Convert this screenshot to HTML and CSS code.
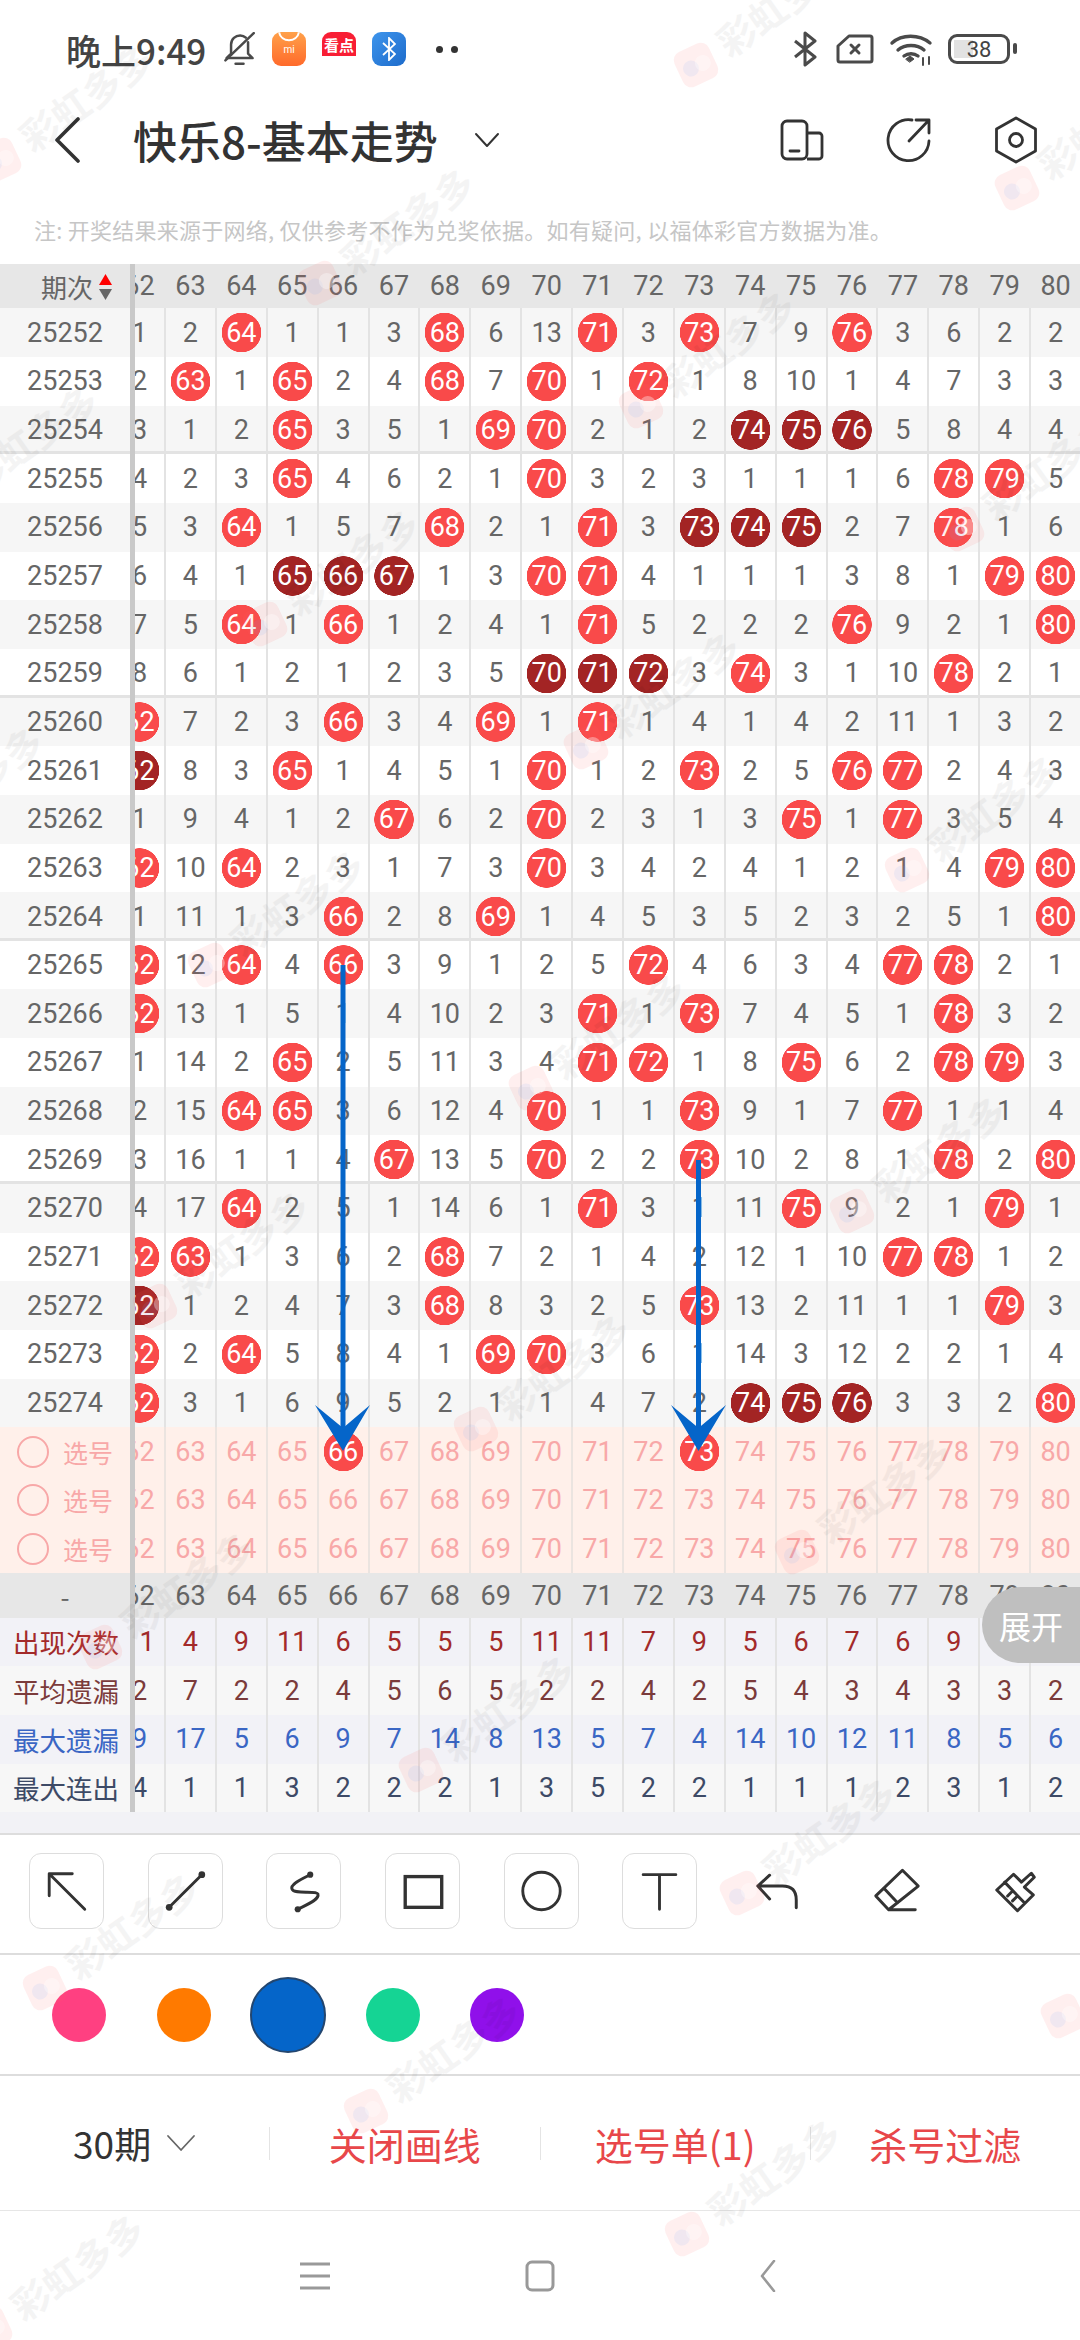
FILE: index.html
```html
<!DOCTYPE html>
<html lang="zh-CN">
<head>
  <meta charset="UTF-8">
  <title>快乐8-基本走势</title>
  <link rel="stylesheet" href="styles.css">
</head>
<body>

  <header class="statusbar">
    <span class="clock">晚上9:49</span>
    <svg class="st-bell" width="32" height="34" viewBox="2 2 28 30" fill="none" stroke="#4a4a4a" stroke-width="2.200" stroke-linecap="round" stroke-linejoin="round"><path d="M9 22V13C9 8 13 5 17 5c2 0 4 1 5 2M24 11v10l4 4H5l4-4"/><path d="M13 30h7"/><path d="M29 3 4 27"/></svg>
    <span class="app app-shop"><svg width="24" height="10" viewBox="0 0 24 10" fill="none" stroke="#fff" stroke-width="2"><path d="M2 0c2 11 18 11 20 0"/></svg><small>mi</small></span>
    <span class="app app-news"><b>看点</b></span>
    <span class="app app-bt"><svg width="14" height="24" viewBox="0 0 14 24" fill="none" stroke="#fff" stroke-width="1.800"><path d="M1 6l12 11-6 6V1l6 6L1 18"/></svg></span>
    <span class="dots"><i></i><i></i></span>

    <div class="status-right">
      <svg class="st-bt" width="24" height="36" viewBox="0 0 24 36" fill="none" stroke="#4a4a4a" stroke-width="3" stroke-linejoin="round"><path d="M2 10l20 16-10 8V2l10 8L2 26"/></svg>
      <svg width="38" height="30" viewBox="0 0 38 30" fill="none" stroke="#4a4a4a" stroke-width="3" stroke-linejoin="round"><path d="M13 2h21a2 2 0 0 1 2 2v22a2 2 0 0 1-2 2H4a2 2 0 0 1-2-2V12z"/><path d="M15 11l8 8M23 11l-8 8" stroke-linecap="round"/></svg>
      <svg width="44" height="34" viewBox="0 0 44 34" fill="none" stroke="#4a4a4a" stroke-width="3.400" stroke-linecap="round"><path d="M3 11c10-9 27-9 38 0M9 18c7-6 19-6 26 0M15 24c4-3 10-3 14 0"/><path d="M17 27l4-3 4 3-4 3z" fill="#4a4a4a" stroke-width="1"/><path d="M34 26v7M40 25v7" stroke-width="2"/></svg>
      <span class="battery"><span class="battery-level"></span><span class="battery-num">38</span></span>
    </div>
  </header>

  <nav class="titlebar">
    <svg class="back" width="30" height="46" viewBox="0 0 30 46" fill="none" stroke="#333" stroke-width="3.600" stroke-linecap="round" stroke-linejoin="round"><path d="M26 2 5 23l21 21"/></svg>
    <h1>快乐8-基本走势</h1>
    <svg class="caret" width="26" height="16" viewBox="0 0 26 16" fill="none" stroke="#333" stroke-width="2" stroke-linecap="round" stroke-linejoin="round"><path d="M2 2l11 12L24 2"/></svg>
    <div class="title-icons">
      <svg width="44" height="42" viewBox="0 0 44 42" fill="none" stroke="#333" stroke-width="2.800" stroke-linejoin="round"><rect x="2" y="2" width="25" height="38" rx="5"/><path d="M27 14h12a3 3 0 0 1 3 3v20a3 3 0 0 1-3 3H27"/><path d="M10 32h9" stroke-linecap="round"/></svg>
      <svg width="46" height="46" viewBox="0 0 46 46" fill="none" stroke="#333" stroke-width="2.800" stroke-linecap="round" stroke-linejoin="round"><path d="M26 3A20.500 20.500 0 1 0 43 24"/><path d="M23 24 43 3M30 3h13v13"/></svg>
      <svg width="44" height="48" viewBox="0 0 44 48" fill="none" stroke="#333" stroke-width="2.800" stroke-linejoin="round"><path d="M22 2l19.500 11v22L22 46 2.500 35V13z"/><circle cx="22" cy="24" r="6.500"/></svg>
    </div>
  </nav>

  <p class="note">注: 开奖结果来源于网络, 仅供参考不作为兑奖依据。如有疑问, 以福体彩官方数据为准。</p>

  <section class="board">
    <div class="row head">
      <div class="period">期次<svg class="sort" width="13" height="26" viewBox="0 0 13 26"><path d="M6.500 0 13 11H0z" fill="#f00"/><path d="M0 15h13L6.500 26z" fill="#666"/></svg></div>
      <div class="cells"><span>62</span><span>63</span><span>64</span><span>65</span><span>66</span><span>67</span><span>68</span><span>69</span><span>70</span><span>71</span><span>72</span><span>73</span><span>74</span><span>75</span><span>76</span><span>77</span><span>78</span><span>79</span><span>80</span></div>
    </div>

    <div class="draws">
      <div class="row"><div class="period">25252</div><div class="cells"><span>1</span><span>2</span><span class="hit">64</span><span>1</span><span>1</span><span>3</span><span class="hit">68</span><span>6</span><span>13</span><span class="hit">71</span><span>3</span><span class="hit">73</span><span>7</span><span>9</span><span class="hit">76</span><span>3</span><span>6</span><span>2</span><span>2</span></div></div>
      <div class="row"><div class="period">25253</div><div class="cells"><span>2</span><span class="hit">63</span><span>1</span><span class="hit">65</span><span>2</span><span>4</span><span class="hit">68</span><span>7</span><span class="hit">70</span><span>1</span><span class="hit">72</span><span>1</span><span>8</span><span>10</span><span>1</span><span>4</span><span>7</span><span>3</span><span>3</span></div></div>
      <div class="row end"><div class="period">25254</div><div class="cells"><span>3</span><span>1</span><span>2</span><span class="hit">65</span><span>3</span><span>5</span><span>1</span><span class="hit">69</span><span class="hit">70</span><span>2</span><span>1</span><span>2</span><span class="hot">74</span><span class="hot">75</span><span class="hot">76</span><span>5</span><span>8</span><span>4</span><span>4</span></div></div>
      <div class="row"><div class="period">25255</div><div class="cells"><span>4</span><span>2</span><span>3</span><span class="hit">65</span><span>4</span><span>6</span><span>2</span><span>1</span><span class="hit">70</span><span>3</span><span>2</span><span>3</span><span>1</span><span>1</span><span>1</span><span>6</span><span class="hit">78</span><span class="hit">79</span><span>5</span></div></div>
      <div class="row"><div class="period">25256</div><div class="cells"><span>5</span><span>3</span><span class="hit">64</span><span>1</span><span>5</span><span>7</span><span class="hit">68</span><span>2</span><span>1</span><span class="hit">71</span><span>3</span><span class="hot">73</span><span class="hot">74</span><span class="hot">75</span><span>2</span><span>7</span><span class="hit">78</span><span>1</span><span>6</span></div></div>
      <div class="row"><div class="period">25257</div><div class="cells"><span>6</span><span>4</span><span>1</span><span class="hot">65</span><span class="hot">66</span><span class="hot">67</span><span>1</span><span>3</span><span class="hit">70</span><span class="hit">71</span><span>4</span><span>1</span><span>1</span><span>1</span><span>3</span><span>8</span><span>1</span><span class="hit">79</span><span class="hit">80</span></div></div>
      <div class="row"><div class="period">25258</div><div class="cells"><span>7</span><span>5</span><span class="hit">64</span><span>1</span><span class="hit">66</span><span>1</span><span>2</span><span>4</span><span>1</span><span class="hit">71</span><span>5</span><span>2</span><span>2</span><span>2</span><span class="hit">76</span><span>9</span><span>2</span><span>1</span><span class="hit">80</span></div></div>
      <div class="row end"><div class="period">25259</div><div class="cells"><span>8</span><span>6</span><span>1</span><span>2</span><span>1</span><span>2</span><span>3</span><span>5</span><span class="hot">70</span><span class="hot">71</span><span class="hot">72</span><span>3</span><span class="hit">74</span><span>3</span><span>1</span><span>10</span><span class="hit">78</span><span>2</span><span>1</span></div></div>
      <div class="row"><div class="period">25260</div><div class="cells"><span class="hit">62</span><span>7</span><span>2</span><span>3</span><span class="hit">66</span><span>3</span><span>4</span><span class="hit">69</span><span>1</span><span class="hit">71</span><span>1</span><span>4</span><span>1</span><span>4</span><span>2</span><span>11</span><span>1</span><span>3</span><span>2</span></div></div>
      <div class="row"><div class="period">25261</div><div class="cells"><span class="hot">62</span><span>8</span><span>3</span><span class="hit">65</span><span>1</span><span>4</span><span>5</span><span>1</span><span class="hit">70</span><span>1</span><span>2</span><span class="hit">73</span><span>2</span><span>5</span><span class="hit">76</span><span class="hit">77</span><span>2</span><span>4</span><span>3</span></div></div>
      <div class="row"><div class="period">25262</div><div class="cells"><span>1</span><span>9</span><span>4</span><span>1</span><span>2</span><span class="hit">67</span><span>6</span><span>2</span><span class="hit">70</span><span>2</span><span>3</span><span>1</span><span>3</span><span class="hit">75</span><span>1</span><span class="hit">77</span><span>3</span><span>5</span><span>4</span></div></div>
      <div class="row"><div class="period">25263</div><div class="cells"><span class="hit">62</span><span>10</span><span class="hit">64</span><span>2</span><span>3</span><span>1</span><span>7</span><span>3</span><span class="hit">70</span><span>3</span><span>4</span><span>2</span><span>4</span><span>1</span><span>2</span><span>1</span><span>4</span><span class="hit">79</span><span class="hit">80</span></div></div>
      <div class="row end"><div class="period">25264</div><div class="cells"><span>1</span><span>11</span><span>1</span><span>3</span><span class="hit">66</span><span>2</span><span>8</span><span class="hit">69</span><span>1</span><span>4</span><span>5</span><span>3</span><span>5</span><span>2</span><span>3</span><span>2</span><span>5</span><span>1</span><span class="hit">80</span></div></div>
      <div class="row"><div class="period">25265</div><div class="cells"><span class="hit">62</span><span>12</span><span class="hit">64</span><span>4</span><span class="hit">66</span><span>3</span><span>9</span><span>1</span><span>2</span><span>5</span><span class="hit">72</span><span>4</span><span>6</span><span>3</span><span>4</span><span class="hit">77</span><span class="hit">78</span><span>2</span><span>1</span></div></div>
      <div class="row"><div class="period">25266</div><div class="cells"><span class="hit">62</span><span>13</span><span>1</span><span>5</span><span>1</span><span>4</span><span>10</span><span>2</span><span>3</span><span class="hit">71</span><span>1</span><span class="hit">73</span><span>7</span><span>4</span><span>5</span><span>1</span><span class="hit">78</span><span>3</span><span>2</span></div></div>
      <div class="row"><div class="period">25267</div><div class="cells"><span>1</span><span>14</span><span>2</span><span class="hit">65</span><span>2</span><span>5</span><span>11</span><span>3</span><span>4</span><span class="hit">71</span><span class="hit">72</span><span>1</span><span>8</span><span class="hit">75</span><span>6</span><span>2</span><span class="hit">78</span><span class="hit">79</span><span>3</span></div></div>
      <div class="row"><div class="period">25268</div><div class="cells"><span>2</span><span>15</span><span class="hit">64</span><span class="hit">65</span><span>3</span><span>6</span><span>12</span><span>4</span><span class="hit">70</span><span>1</span><span>1</span><span class="hit">73</span><span>9</span><span>1</span><span>7</span><span class="hit">77</span><span>1</span><span>1</span><span>4</span></div></div>
      <div class="row end"><div class="period">25269</div><div class="cells"><span>3</span><span>16</span><span>1</span><span>1</span><span>4</span><span class="hit">67</span><span>13</span><span>5</span><span class="hit">70</span><span>2</span><span>2</span><span class="hit">73</span><span>10</span><span>2</span><span>8</span><span>1</span><span class="hit">78</span><span>2</span><span class="hit">80</span></div></div>
      <div class="row"><div class="period">25270</div><div class="cells"><span>4</span><span>17</span><span class="hit">64</span><span>2</span><span>5</span><span>1</span><span>14</span><span>6</span><span>1</span><span class="hit">71</span><span>3</span><span>1</span><span>11</span><span class="hit">75</span><span>9</span><span>2</span><span>1</span><span class="hit">79</span><span>1</span></div></div>
      <div class="row"><div class="period">25271</div><div class="cells"><span class="hit">62</span><span class="hit">63</span><span>1</span><span>3</span><span>6</span><span>2</span><span class="hit">68</span><span>7</span><span>2</span><span>1</span><span>4</span><span>2</span><span>12</span><span>1</span><span>10</span><span class="hit">77</span><span class="hit">78</span><span>1</span><span>2</span></div></div>
      <div class="row"><div class="period">25272</div><div class="cells"><span class="hot">62</span><span>1</span><span>2</span><span>4</span><span>7</span><span>3</span><span class="hit">68</span><span>8</span><span>3</span><span>2</span><span>5</span><span class="hit">73</span><span>13</span><span>2</span><span>11</span><span>1</span><span>1</span><span class="hit">79</span><span>3</span></div></div>
      <div class="row"><div class="period">25273</div><div class="cells"><span class="hit">62</span><span>2</span><span class="hit">64</span><span>5</span><span>8</span><span>4</span><span>1</span><span class="hit">69</span><span class="hit">70</span><span>3</span><span>6</span><span>1</span><span>14</span><span>3</span><span>12</span><span>2</span><span>2</span><span>1</span><span>4</span></div></div>
      <div class="row"><div class="period">25274</div><div class="cells"><span class="hit">62</span><span>3</span><span>1</span><span>6</span><span>9</span><span>5</span><span>2</span><span>1</span><span>1</span><span>4</span><span>7</span><span>2</span><span class="hot">74</span><span class="hot">75</span><span class="hot">76</span><span>3</span><span>3</span><span>2</span><span class="hit">80</span></div></div>
    </div>

    <div class="row pick"><div class="period"><i class="pick-dot"></i>选号</div><div class="cells"><span>62</span><span>63</span><span>64</span><span>65</span><span class="hit">66</span><span>67</span><span>68</span><span>69</span><span>70</span><span>71</span><span>72</span><span class="hit">73</span><span>74</span><span>75</span><span>76</span><span>77</span><span>78</span><span>79</span><span>80</span></div></div>
    <div class="row pick"><div class="period"><i class="pick-dot"></i>选号</div><div class="cells"><span>62</span><span>63</span><span>64</span><span>65</span><span>66</span><span>67</span><span>68</span><span>69</span><span>70</span><span>71</span><span>72</span><span>73</span><span>74</span><span>75</span><span>76</span><span>77</span><span>78</span><span>79</span><span>80</span></div></div>
    <div class="row pick"><div class="period"><i class="pick-dot"></i>选号</div><div class="cells"><span>62</span><span>63</span><span>64</span><span>65</span><span>66</span><span>67</span><span>68</span><span>69</span><span>70</span><span>71</span><span>72</span><span>73</span><span>74</span><span>75</span><span>76</span><span>77</span><span>78</span><span>79</span><span>80</span></div></div>

    <div class="row head sub">
      <div class="period">-</div>
      <div class="cells"><span>62</span><span>63</span><span>64</span><span>65</span><span>66</span><span>67</span><span>68</span><span>69</span><span>70</span><span>71</span><span>72</span><span>73</span><span>74</span><span>75</span><span>76</span><span>77</span><span>78</span><span>79</span><span>80</span></div>
    </div>

    <div class="row stat stat-count"><div class="period">出现次数</div><div class="cells"><span>11</span><span>4</span><span>9</span><span>11</span><span>6</span><span>5</span><span>5</span><span>5</span><span>11</span><span>11</span><span>7</span><span>9</span><span>5</span><span>6</span><span>7</span><span>6</span><span>9</span><span>8</span><span>8</span></div></div>
    <div class="row stat stat-avg"><div class="period">平均遗漏</div><div class="cells"><span>2</span><span>7</span><span>2</span><span>2</span><span>4</span><span>5</span><span>6</span><span>5</span><span>2</span><span>2</span><span>4</span><span>2</span><span>5</span><span>4</span><span>3</span><span>4</span><span>3</span><span>3</span><span>2</span></div></div>
    <div class="row stat stat-max"><div class="period">最大遗漏</div><div class="cells"><span>9</span><span>17</span><span>5</span><span>6</span><span>9</span><span>7</span><span>14</span><span>8</span><span>13</span><span>5</span><span>7</span><span>4</span><span>14</span><span>10</span><span>12</span><span>11</span><span>8</span><span>5</span><span>6</span></div></div>
    <div class="row stat stat-run"><div class="period">最大连出</div><div class="cells"><span>4</span><span>1</span><span>1</span><span>3</span><span>2</span><span>2</span><span>2</span><span>1</span><span>3</span><span>5</span><span>2</span><span>2</span><span>1</span><span>1</span><span>1</span><span>2</span><span>3</span><span>1</span><span>2</span></div></div>

    <button class="expand">展开</button>
  </section>

  <div class="toolbar">
    <button class="tool boxed"><svg viewBox="0 0 76 76"><path d="M57 57 20 20M44 20H20v23"/></svg></button>
    <button class="tool boxed"><svg viewBox="0 0 76 76"><path d="M55 21 21 55"/><circle class="fill" cx="55" cy="21" r="3.500"/><circle class="fill" cx="21" cy="55" r="3.500"/></svg></button>
    <button class="tool boxed"><svg viewBox="0 0 76 76"><path d="M45 21C35 26 24 31 26 36c2 6 25 1 27 5 2 6-11 11-21 16"/><circle class="fill" cx="45" cy="21" r="3.200"/><circle class="fill" cx="32" cy="57" r="3.200"/></svg></button>
    <button class="tool boxed"><svg viewBox="0 0 76 76"><rect class="thick" x="20" y="23" width="38" height="32"/></svg></button>
    <button class="tool boxed"><svg viewBox="0 0 76 76"><circle cx="38" cy="38" r="19.500"/></svg></button>
    <button class="tool boxed"><svg viewBox="0 0 76 76"><path d="M21 21h34M38 21v36"/></svg></button>
    <button class="tool"><svg viewBox="0 0 76 76"><path d="M29 22 17 33l12 13M17 33h25q14 0 14 14v8"/></svg></button>
    <button class="tool"><svg viewBox="0 0 76 76"><path d="M43 17l16 16-30 24-13-14zM24 35l14 15M29 57h27"/></svg></button>
    <button class="tool"><svg viewBox="0 0 76 76"><path d="M18 37 35 21l8 8 10-9 3 4-10 10 9 8-16 16zM26 29l20 21M29 43l5-5M34 48l5-5"/></svg></button>
  </div>

  <div class="palette">
    <span class="swatch"><i class="pink"></i></span>
    <span class="swatch"><i class="orange"></i></span>
    <span class="swatch"><i class="blue on"></i></span>
    <span class="swatch"><i class="green"></i></span>
    <span class="swatch"><i class="purple"></i></span>
  </div>

  <div class="actions">
    <div class="act plain">30期<svg width="30" height="18" viewBox="0 0 30 18" fill="none" stroke="#666" stroke-width="1.800" stroke-linecap="round" stroke-linejoin="round"><path d="M2 2l13 14L28 2"/></svg></div>
    <div class="act">关闭画线</div>
    <div class="act">选号单(1)</div>
    <div class="act">杀号过滤</div>
  </div>

  <div class="navbar">
    <svg width="30" height="30" viewBox="0 0 30 30" fill="none" stroke="#999" stroke-width="3"><path d="M0 3h30M0 15h30M0 27h30"/></svg>
    <svg width="30" height="32" viewBox="0 0 30 32" fill="none" stroke="#999" stroke-width="3"><rect x="2" y="2" width="26" height="28" rx="5"/></svg>
    <svg width="30" height="32" viewBox="0 0 30 32" fill="none" stroke="#999" stroke-width="2.600" stroke-linecap="round" stroke-linejoin="round"><path d="M24 1 12 16l12 15"/></svg>
  </div>

  <svg class="overlay" width="1080" height="2340" viewBox="0 0 1080 2340">
    <defs>
      <g id="mark" transform="rotate(-35)">
        <g transform="rotate(10)">
          <rect x="-19" y="-19" width="38" height="38" rx="9" fill="#f66" opacity="0.1"/>
          <circle cx="-6" cy="1" r="8" fill="#6aa8ff" opacity="0.1"/>
          <circle cx="7" cy="1" r="8" fill="#fff" opacity="0.35"/>
        </g>
        <text x="31" y="14" font-size="38" font-weight="700" fill="#000" opacity="0.04">彩虹多多</text>
      </g>
    </defs>
    <use href="#mark" x="375" y="-58"/><use href="#mark" x="696" y="65"/><use href="#mark" x="1017" y="188"/>
    <use href="#mark" x="-1" y="160"/><use href="#mark" x="320" y="283"/><use href="#mark" x="641" y="406"/><use href="#mark" x="962" y="529"/>
    <use href="#mark" x="-56" y="501"/><use href="#mark" x="265" y="624"/><use href="#mark" x="586" y="747"/><use href="#mark" x="907" y="870"/>
    <use href="#mark" x="-111" y="842"/><use href="#mark" x="210" y="965"/><use href="#mark" x="531" y="1088"/><use href="#mark" x="852" y="1211"/>
    <use href="#mark" x="155" y="1306"/><use href="#mark" x="476" y="1429"/><use href="#mark" x="797" y="1552"/>
    <use href="#mark" x="100" y="1647"/><use href="#mark" x="421" y="1770"/><use href="#mark" x="742" y="1893"/><use href="#mark" x="1063" y="2016"/>
    <use href="#mark" x="45" y="1988"/><use href="#mark" x="366" y="2111"/><use href="#mark" x="687" y="2234"/><use href="#mark" x="-10" y="2329"/>

    <g fill="#0565c9">
      <rect x="340.500" y="965" width="5" height="470"/>
      <path d="M315 1405 343 1428 370 1405 343 1451z"/>
      <rect x="696" y="1160" width="5" height="275"/>
      <path d="M671 1405 698.500 1428 726 1405 698.500 1451z"/>
    </g>
  </svg>

</body>
</html>
```

FILE: styles.css
```css
* {
  box-sizing: border-box;
}
html, body {
  margin: 0;
  padding: 0;
}
body {
  position: relative;
  width: 1080px;
  height: 2340px;
  overflow: hidden;
  background: #fff;
  color: #333;
  font-family: Roboto, "Noto Sans CJK SC", sans-serif;
}
svg {
  display: block;
  flex: none;
}

/* status bar */
.statusbar {
  height: 98px;
  padding: 0 62px 0 66px;
  display: flex;
  align-items: center;
}
.clock {
  width: 157px;
  font-family: "Noto Sans CJK SC", sans-serif;
  font-size: 35px;
  font-weight: 500;
  color: #444;
}
.st-bell {
  margin-right: 17px;
}
.app {
  width: 34px;
  height: 34px;
  margin-right: 16px;
  border-radius: 9px;
  display: flex;
  flex-direction: column;
  align-items: center;
  justify-content: center;
  overflow: hidden;
}
.app-shop {
  justify-content: flex-start;
  background: linear-gradient(#ffa14a, #ff6a2b);
}
.app-shop small {
  margin-top: 3px;
  font-size: 10px;
  line-height: 10px;
  color: #fff;
}
.app-news {
  justify-content: flex-start;
  background: linear-gradient(#f81e34 72%, #fff 72%);
}
.app-news b {
  font-family: "Noto Sans CJK SC", sans-serif;
  font-size: 15px;
  line-height: 25px;
  color: #fff;
}
.app-bt {
  background: linear-gradient(135deg, #3e95ec, #1d6bcb);
}
.dots {
  margin-left: 14px;
  display: flex;
  gap: 8px;
}
.dots i {
  width: 7px;
  height: 7px;
  border-radius: 50%;
  background: #333;
}
.status-right {
  margin-left: auto;
  display: flex;
  align-items: center;
  gap: 15px;
}
.st-bt {
  margin-right: 4px;
}
.battery {
  position: relative;
  width: 62px;
  height: 30px;
  border: 3px solid #4a4a4a;
  border-radius: 9px;
  display: flex;
  align-items: center;
  justify-content: center;
  margin-right: 8px;
}
.battery::after {
  content: "";
  position: absolute;
  right: -10px;
  top: 6px;
  width: 4px;
  height: 11px;
  border-radius: 2px;
  background: #4a4a4a;
}
.battery-level {
  position: absolute;
  left: 3px;
  top: 3px;
  bottom: 3px;
  width: 19px;
  background: #e2e2e2;
}
.battery-num {
  position: relative;
  font-size: 22px;
  color: #444;
}

/* title */
.titlebar {
  height: 84px;
  padding-left: 52px;
  display: flex;
  align-items: center;
}
.titlebar h1 {
  margin: 0 0 0 51px;
  font-family: "Noto Sans CJK SC", sans-serif;
  font-size: 44px;
  font-weight: 500;
  line-height: 60px;
  color: #333;
}
.caret {
  margin-left: 36px;
}
.title-icons {
  margin-left: auto;
  padding-right: 42px;
  display: flex;
  align-items: center;
  gap: 62px;
}
.note {
  margin: 0;
  height: 82px;
  padding: 15px 0 0 34px;
  font-family: "Noto Sans CJK SC", sans-serif;
  font-size: 22px;
  line-height: 64px;
  letter-spacing: 0.25px;
  color: #c6c6c6;
  white-space: nowrap;
}

/* trend table */
.row {
  height: 48.67px;
  display: flex;
  font-size: 27px;
  color: #666;
}
.period {
  flex: none;
  width: 135px;
  border-right: 5px solid #c9c9c9;
  display: flex;
  align-items: center;
  justify-content: center;
}
.cells {
  flex: 1;
  min-width: 0;
  margin-right: -2px;
  display: flex;
  justify-content: flex-end;
  overflow: hidden;
}
.cells span {
  flex: none;
  width: 50.9px;
  border-right: 2px solid #e3e3e3;
  display: flex;
  align-items: center;
  justify-content: center;
}
.cells .hit, .cells .hot {
  color: #fff;
  background: radial-gradient(circle at center, #f94a4a 19.5px, transparent 20px);
}
.cells .hot {
  background: radial-gradient(circle at center, #a32424 19.5px, transparent 20px);
}
.draws .row:nth-child(odd) {
  background: #f6f6f6;
}
.end {
  box-shadow: inset 0 -3px #e3e3e3;
}
.row.head {
  height: 44.3px;
  background: #e7e7e7;
}
.head .cells span {
  border-color: transparent;
}
.head .period {
  padding-left: 41px;
  justify-content: flex-start;
  font-family: "Noto Sans CJK SC", sans-serif;
  font-size: 26px;
  gap: 6px;
}
.head.sub .period {
  padding-left: 0;
  justify-content: center;
}
.sort {
  margin-top: 2px;
}
.pick {
  background: #fff0ea;
  color: #f8a8a8;
}
.pick .period {
  padding-left: 17px;
  justify-content: flex-start;
  gap: 14px;
  font-family: "Noto Sans CJK SC", sans-serif;
  font-size: 25px;
}
.pick-dot {
  width: 32px;
  height: 32px;
  border: 2px solid #f8a8a8;
  border-radius: 50%;
}
.pick .cells span {
  border-color: #ebe4e0;
}
.stat .period {
  padding-left: 2px;
  font-family: "Noto Sans CJK SC", sans-serif;
  font-size: 26.5px;
}
.stat-count, .stat-max {
  background: #f2f2f7;
}
.stat-avg, .stat-run {
  background: #f7f7f7;
}
.stat-count {
  color: #a32a2a;
}
.stat-avg {
  color: #7b3b3b;
}
.stat-max {
  color: #3a66c4;
}
.stat-run {
  color: #3d4a66;
}
.board {
  position: relative;
}
.expand {
  position: absolute;
  top: 1323px;
  right: 0;
  width: 98px;
  height: 76px;
  padding: 0;
  border: none;
  border-radius: 38px 0 0 38px;
  background: #bfbfbf;
  color: #fff;
  font-family: "Noto Sans CJK SC", sans-serif;
  font-size: 32px;
}

/* drawing tools */
.toolbar {
  height: 143px;
  padding: 20px 0 0 29px;
  border-top: 21px solid #f2f2f6;
  border-bottom: 2px solid #ddd;
  display: flex;
  gap: 43.7px;
  box-shadow: inset 0 2px #ddd;
}
.tool {
  flex: none;
  width: 75px;
  height: 76px;
  padding: 0;
  border: none;
  border-radius: 12px;
  background: transparent;
}
.tool.boxed {
  border: 1.5px solid #ddd;
}
.tool svg {
  width: 100%;
  height: 100%;
  fill: none;
  stroke: #333;
  stroke-width: 3px;
  stroke-linecap: round;
  stroke-linejoin: round;
}
.tool .fill {
  fill: #333;
  stroke: none;
}
.tool .thick {
  stroke-width: 3.5px;
  stroke-linejoin: miter;
}
.palette {
  height: 121px;
  padding-left: 27px;
  border-bottom: 2px solid #ddd;
  display: flex;
  align-items: center;
}
.swatch {
  width: 104.5px;
  display: flex;
  justify-content: center;
}
.swatch i {
  width: 54px;
  height: 54px;
  border-radius: 50%;
}
.swatch .on {
  width: 76px;
  height: 76px;
  border: 2px solid #23466f;
}
.pink { background: #ff4081; }
.orange { background: #ff7a00; }
.blue { background: #0565c9; }
.green { background: #15d494; }
.purple { background: #9010ea; }

/* bottom actions */
.actions {
  height: 135px;
  border-bottom: 1px solid #e6e6e6;
  display: flex;
  align-items: center;
}
.act {
  flex: 1;
  height: 33px;
  border-left: 1.5px solid #e4e4e4;
  display: flex;
  align-items: center;
  justify-content: center;
  font-family: "Noto Sans CJK SC", sans-serif;
  font-size: 38px;
  color: #e8474a;
}
.act.plain {
  border-left: none;
  gap: 15px;
  font-size: 37px;
  color: #333;
}
.navbar {
  height: 129px;
  display: flex;
  align-items: center;
  justify-content: center;
  gap: 195px;
}
.overlay {
  position: absolute;
  left: 0;
  top: 0;
  pointer-events: none;
  font-family: "Noto Sans CJK SC", sans-serif;
}
```
